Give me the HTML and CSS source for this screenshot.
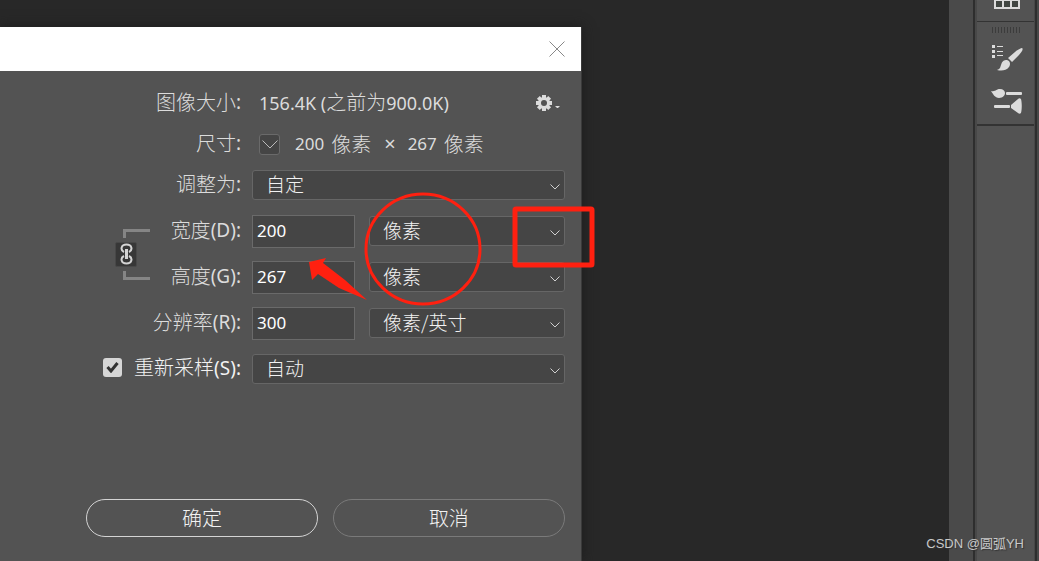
FILE: index.html
```html
<!DOCTYPE html>
<html lang="zh-CN">
<head>
<meta charset="utf-8">
<title>图像大小</title>
<link rel="stylesheet" href="styles.css">
</head>
<body>
<div class="workspace">
  <main class="canvas"></main>
  <div class="gutter"></div>
  <aside class="dock">
    <div class="dock-group dock-first">
      <button class="tool" aria-label="色板">
        <svg width="26" height="10" viewBox="0 0 26 10"><path fill="#dcdcdc" d="M0 0h26v9H0z"/><path fill="#414642" d="M2 1h6v6H2zM10 1h6v6h-6zM18 1h6v6h-6z"/></svg>
      </button>
    </div>
    <div class="dock-group dock-brushes">
      <div class="grip"></div>
      <button class="tool" aria-label="画笔设置">
        <svg width="32" height="28" viewBox="0 0 32 28" fill="#dcdcdc"><path d="M1 1h3v3H1zM1 6h3v3H1zM1 11h3v3H1zM6 2h6v1H6zM6 7h6v1H6zM6 11h6v1H6z"/><path d="M31 4c2 1-1 5-3 7l-7 7-4-4 7-6c2-2 6-4 7-4z"/><path d="M16 16c3 1 4 4 2 7-3 4-8 4-12 3 3-1 3-2 4-5 1-4 3-5 6-5z"/></svg>
      </button>
      <button class="tool" aria-label="画笔">
        <svg width="32" height="26" viewBox="0 0 32 26" fill="#dcdcdc"><path d="M0 3c5 1 5-2 9-2 3 0 5 2 5 4s-2 5-6 5S2 6 0 3z"/><rect x="15" y="4" width="16" height="3" rx="1"/><rect x="3" y="17" width="16" height="3" rx="1"/><path d="M20 17l7-6c1-1 2-1 3 0 1 4 1 10 0 14-1 1-2 1-3 0l-7-5z"/></svg>
      </button>
    </div>
  </aside>
  <div class="edge"></div>
</div>

<form class="dialog">
  <header class="titlebar">
    <button type="button" class="close" aria-label="关闭"><svg width="16" height="16" viewBox="0 0 16 16"><path d="M.5.5l15 15M15.500.5l-15 15" stroke="#888" fill="none"/></svg></button>
  </header>
  <div class="body">
    <div class="row">
      <span class="label">图像大小<span class="num">:</span></span>
      <div class="value"><span class="num">156.4K (</span>之前为<span class="num">900.0K)</span></div>
      <button type="button" class="gear" aria-label="设置"><svg width="24" height="18" viewBox="0 0 24 18"><g fill="#dcdcdc"><circle cx="8" cy="9" r="6"/><path d="M6 1h4v16H6z"/><path d="M0 7h16v4H0z"/><path d="M6 1h4v16H6z" transform="rotate(45 8 9)"/><path d="M6 1h4v16H6z" transform="rotate(-45 8 9)"/><path d="M19 12h5l-2 2h-1z"/></g><circle cx="8" cy="9" r="3" fill="#535353"/></svg></button>
    </div>
    <div class="row">
      <span class="label">尺寸<span class="num">:</span></span>
      <div class="value sizes">
        <button type="button" class="drop" aria-label="单位"><svg width="16" height="9" viewBox="0 0 16 9"><path d="M.5.5L8 8 15.500.5" stroke="#bbb" fill="none"/></svg></button>
        <span class="num">200</span><span class="unit">像素</span><span class="num times">×</span><span class="num">267</span><span class="unit">像素</span>
      </div>
    </div>
    <div class="row">
      <label class="label" for="fit">调整为<span class="num">:</span></label>
      <div class="select"><select id="fit"><option>自定</option></select><svg class="chev" viewBox="0 0 10 6"><path d="M.5.5L5 5 9.500.5"/></svg></div>
    </div>
    <div class="linked">
      <div class="link">
        <span class="bracket top"></span>
        <button type="button" class="chain" aria-label="限制长宽比"><svg width="13" height="22" viewBox="0 0 13 22" fill="none" stroke="#d4d4d4" stroke-width="2"><path d="M4 9C0 7 1 1.500 6.500 1.500S13 7 9 9M4 13c-4 2-3 7.500 2.500 7.500S13 15 9 13"/><path d="M6.500 6v10" stroke-width="3"/></svg></button>
        <span class="bracket bottom"></span>
      </div>
      <div class="pair">
        <div class="row">
          <label class="label" for="w">宽度<span class="num">(D):</span></label>
          <input class="text" id="w" type="text" value="200">
          <div class="select"><select aria-label="宽度单位"><option>像素</option></select><svg class="chev" viewBox="0 0 10 6"><path d="M.5.5L5 5 9.500.5"/></svg></div>
        </div>
        <div class="row">
          <label class="label" for="h">高度<span class="num">(G):</span></label>
          <input class="text" id="h" type="text" value="267">
          <div class="select"><select aria-label="高度单位"><option>像素</option></select><svg class="chev" viewBox="0 0 10 6"><path d="M.5.5L5 5 9.500.5"/></svg></div>
        </div>
      </div>
    </div>
    <div class="row">
      <label class="label" for="r">分辨率<span class="num">(R):</span></label>
      <input class="text" id="r" type="text" value="300">
      <div class="select"><select aria-label="分辨率单位"><option>像素/英寸</option></select><svg class="chev" viewBox="0 0 10 6"><path d="M.5.5L5 5 9.500.5"/></svg></div>
    </div>
    <div class="row">
      <label class="label bright"><span class="box"><input type="checkbox" checked><svg viewBox="0 0 13 12"><path d="M1.500 6L5 10l6.500-8" fill="none" stroke="#333" stroke-width="3"/></svg></span><span>重新采样<span class="num">(S):</span></span></label>
      <div class="select"><select aria-label="重新采样方法"><option>自动</option></select><svg class="chev" viewBox="0 0 10 6"><path d="M.5.5L5 5 9.500.5"/></svg></div>
    </div>
    <div class="actions">
      <button type="submit" class="btn primary">确定</button>
      <button type="button" class="btn">取消</button>
    </div>
  </div>
</form>

<svg class="marks" width="600" height="320" viewBox="0 0 600 320">
  <ellipse cx="423" cy="249" rx="57" ry="55" fill="none" stroke="#ff2010" stroke-width="3"/>
  <rect x="515" y="209" width="77" height="56" rx="1" fill="none" stroke="#ff2010" stroke-width="5" stroke-linejoin="round"/>
  <path d="M309 262l17-4-3 5 22 17 22 20-28-12-21-14-6 6z" fill="#ff2010"/>
</svg>
<div class="credit">CSDN @圆弧YH</div>
</body>
</html>
```
FILE: styles.css
```css
* { box-sizing: border-box; }
body {
  margin: 0;
  background: #282828;
  color: #dcdcdc;
  font: 300 20px/24px "Noto Sans CJK SC", sans-serif;
}
button { padding: 0; border: 0; background: none; color: inherit; font: inherit; }
svg { display: block; }
.num { font: 400 18px/24px "Noto Sans", sans-serif; }

.workspace { display: flex; height: 100vh; overflow: hidden; }
.canvas { flex: 1; background: #282828; }
.gutter { width: 26px; background: #4a4a4a; border-right: 2px solid #2e2e2e; }
.dock { width: 60px; background: #535353; border: solid #484848; border-width: 0 1px 0 2px; }
.dock-group { display: flex; flex-direction: column; align-items: center; padding-left: 2px; border-bottom: 2px solid #333; }
.dock-first { height: 22px; border-bottom-width: 1px; }
.dock-brushes { gap: 16px; padding-top: 5px; padding-bottom: 10px; }
.grip { width: 29px; height: 6px; margin-bottom: -5px; background: repeating-linear-gradient(90deg, #3c3c3c 0 1px, transparent 1px 3px); }
.edge { width: 4px; background: #484848; border-left: 2px solid #2e2e2e; }

.dialog {
  position: absolute;
  left: 0;
  top: 27px;
  bottom: 0;
  width: 56vw;
  min-width: 540px;
  display: flex;
  flex-direction: column;
  background: #535353;
  border-right: 1px solid #3a3a3a;
  box-shadow: 0 0 12px #1c1c1c;
}
.titlebar { display: flex; justify-content: flex-end; align-items: center; height: 44px; padding-right: 16px; background: #fff; }
.body { flex: 1; display: flex; flex-direction: column; gap: 12px; padding: 15px 16px 24px 0; }
.row { display: flex; align-items: center; gap: 11px; height: 34px; }
.body > .row:nth-child(-n+2) { margin-bottom: -5px; }
.label { display: flex; justify-content: flex-end; align-items: center; flex: none; width: 241px; padding-bottom: 3px; white-space: nowrap; }
.label .num { font-size: 19px; }
.value { padding: 0 0 2px 7px; white-space: nowrap; }
.gear { margin-left: auto; margin-right: 5px; }
.sizes { display: flex; align-items: center; padding-bottom: 0; }
.sizes .num { font-size: 17px; }
.drop { display: grid; place-items: center; width: 21px; height: 21px; margin-right: 15px; background: #454545; border: 1px solid #6a6a6a; border-radius: 3px; }
.unit { margin-left: 7px; }
.sizes .times { margin: 0 12px 0 13px; font-size: 20px; }

.select { position: relative; flex: 1; }
select {
  display: block;
  width: 100%;
  height: 30px;
  padding: 0 24px 2px 13px;
  appearance: none;
  background: #454545;
  border: 1px solid #666;
  border-radius: 3px;
  color: #f2f2f2;
  font: inherit;
  font-size: 19px;
}
.chev { position: absolute; right: 5px; top: 14px; width: 10px; height: 6px; fill: none; stroke: #d0d0d0; pointer-events: none; }
.text {
  flex: none;
  width: 103px;
  height: 33px;
  padding: 0 4px 2px;
  background: #454545;
  border: 1px solid #6a6a6a;
  color: #fff;
  font: 400 17px "Noto Sans", sans-serif;
}
.text + .select { margin-left: 3px; }

.linked { display: flex; }
.link { width: 150px; display: flex; flex-direction: column; justify-content: center; align-items: flex-end; gap: 4px; }
.bracket { width: 27px; height: 9px; border-left: 3px solid #858585; }
.top { border-top: 3px solid #858585; }
.bottom { border-bottom: 3px solid #858585; }
.chain { display: grid; place-items: center; width: 22px; height: 25px; margin-right: 13px; background: #373737; border: 1px solid #484848; border-radius: 2px; }
.pair { flex: 1; display: flex; flex-direction: column; gap: 12px; }
.pair .label { width: 91px; }

.bright { color: #f2f2f2; gap: 12px; }
.box { position: relative; display: block; width: 19px; height: 19px; }
.box input { display: block; width: 100%; height: 100%; margin: 0; appearance: none; background: #d6d6d6; border-radius: 3px; }
.box svg { position: absolute; inset: 3px; pointer-events: none; }

.actions { display: flex; gap: 15px; margin-top: auto; padding-left: 86px; }
.btn { flex: 1; height: 38px; padding-bottom: 1px; border: 1px solid #7a7a7a; border-radius: 19px; color: #f2f2f2; }
.primary { border-color: #d4d4d4; }

.marks { position: absolute; left: 0; top: 0; pointer-events: none; }
.credit {
  position: absolute;
  right: 15px;
  bottom: 7px;
  color: #c8c8c8;
  font: 400 13px/20px "Liberation Sans", "Noto Sans CJK SC", sans-serif;
  text-shadow: 1px 1px 1px #333;
}
```
